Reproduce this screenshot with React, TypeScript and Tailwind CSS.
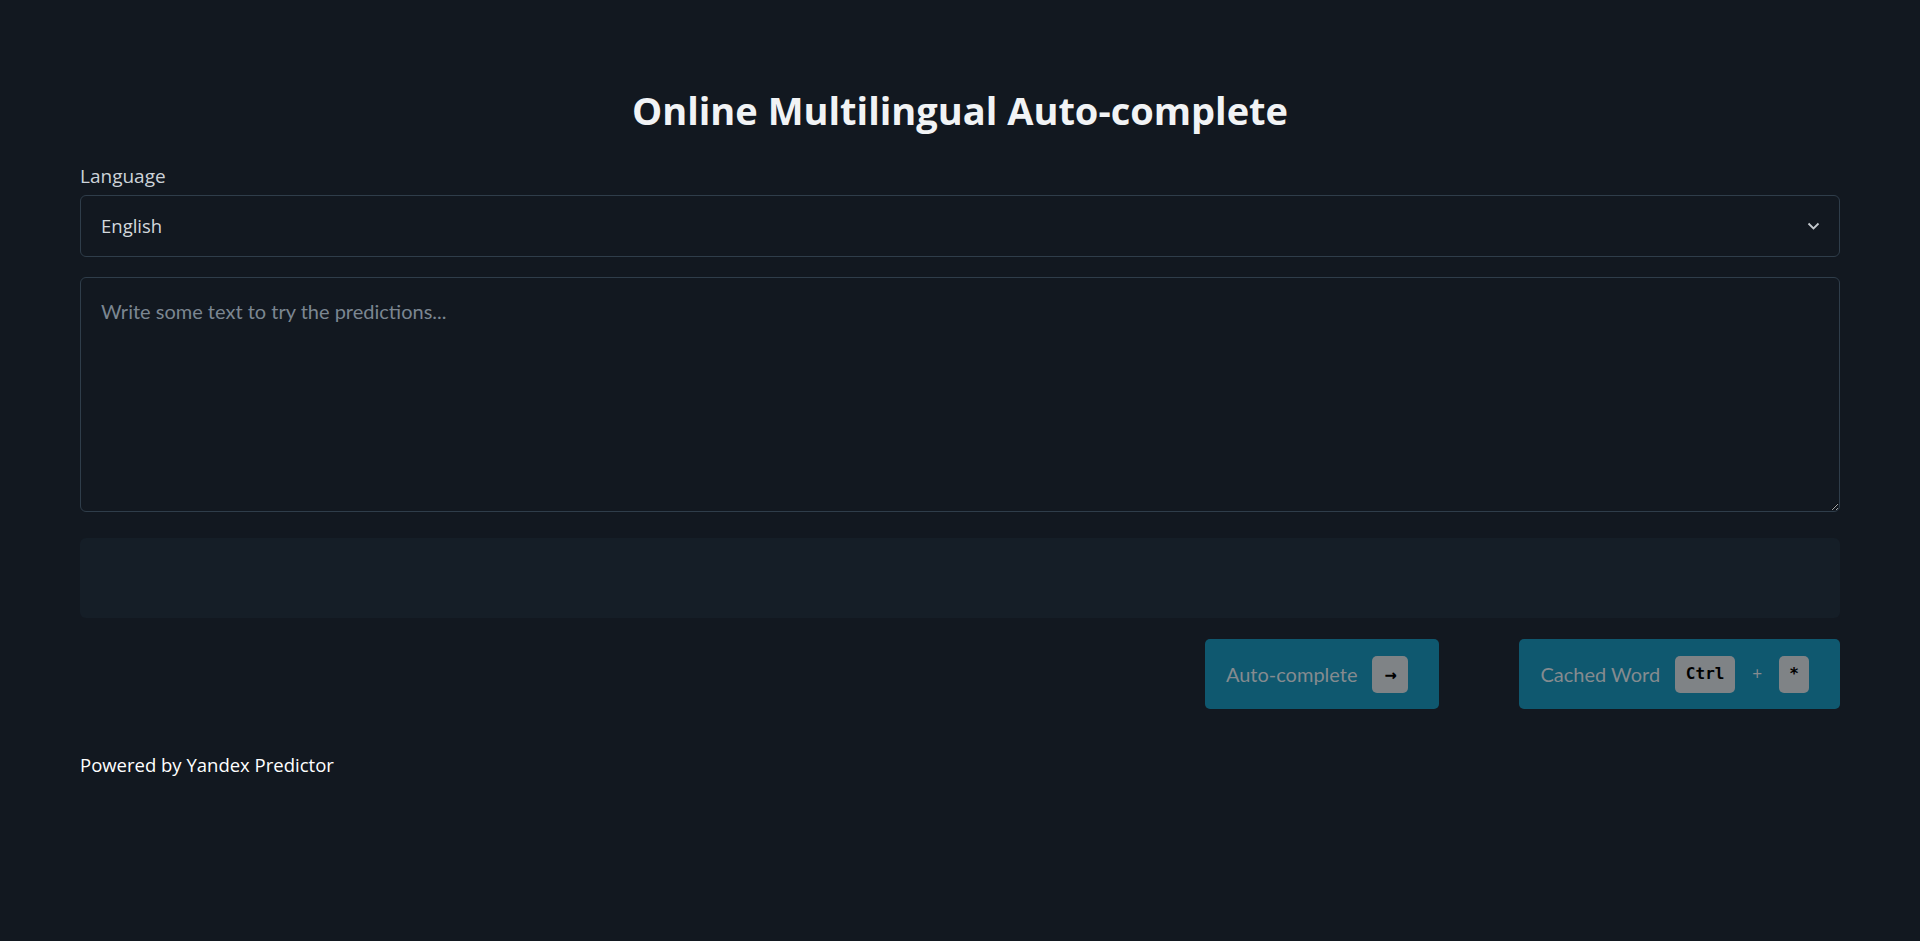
import React from "react";

function Kbd({ children, className = "" }: { children: React.ReactNode; className?: string }) {
  return (
    <kbd
      className={
        "flex h-[37px] items-center justify-center rounded-[5px] bg-[#7f8386] font-['DejaVu_Sans_Mono',monospace] text-[16px] font-bold text-black " +
        className
      }
    >
      {children}
    </kbd>
  );
}

export default function App() {
  return (
    <div className="min-h-[941px] w-full bg-[#121820] px-20 pt-[87px] font-['Open_Sans',sans-serif]">
      <h1 className="text-center text-[38px] leading-[46px] font-bold text-[#f1f3f5]">
        Online Multilingual Auto-complete
      </h1>

      <label className="mt-[30px] block text-[19px] leading-[26px] text-[#cdd3d9]">Language</label>
      <div className="relative mt-[6px]">
        <select className="h-[62px] w-full appearance-none rounded-[6px] border border-[#2f3d4a] bg-[#121820] pl-[20px] text-[18.5px] text-[#d3d8dd] outline-none">
          <option>English</option>
        </select>
        <svg
          className="pointer-events-none absolute right-[20px] top-[26px] h-[10px] w-[13px]"
          viewBox="0 0 13 10"
          fill="none"
          stroke="#c3c8cd"
          strokeWidth="1.8"
        >
          <path d="M1.5 2.5 L6.5 7.5 L11.5 2.5" />
        </svg>
      </div>

      <textarea
        className="mt-[20px] block h-[235px] w-full resize-y rounded-[6px] border border-[#2f3d4a] bg-[#121820] px-[20px] py-[18px] font-['Lato',sans-serif] text-[20px] text-[#d3d8dd] outline-none placeholder:text-[#7b8691]"
        placeholder="Write some text to try the predictions..."
      />

      <div className="mt-[26px] h-[80px] rounded-[6px] bg-[#151e27]" />

      <div className="mt-[21px] flex justify-end gap-20 font-['Lato',sans-serif]">
        <button className="flex h-[70px] items-center rounded-[5px] bg-[#0f586f] pl-[21px] pr-[31px] text-[20px] text-[#858b8f]">
          <span>Auto-complete</span>
          <Kbd className="ml-[15px] w-[36px] font-['DejaVu_Sans',sans-serif] text-[20px]">→</Kbd>
        </button>
        <button className="flex h-[70px] items-center rounded-[5px] bg-[#0f586f] pl-[21px] pr-[31px] text-[20px] text-[#858b8f]">
          <span>Cached Word</span>
          <Kbd className="ml-[15px] w-[60px]">Ctrl</Kbd>
          <span className="mx-[17px] text-[17px]">+</span>
          <Kbd className="w-[30px]">*</Kbd>
        </button>
      </div>

      <p className="mt-[43px] text-[18.5px] leading-[26px] text-white">Powered by Yandex Predictor</p>
    </div>
  );
}
